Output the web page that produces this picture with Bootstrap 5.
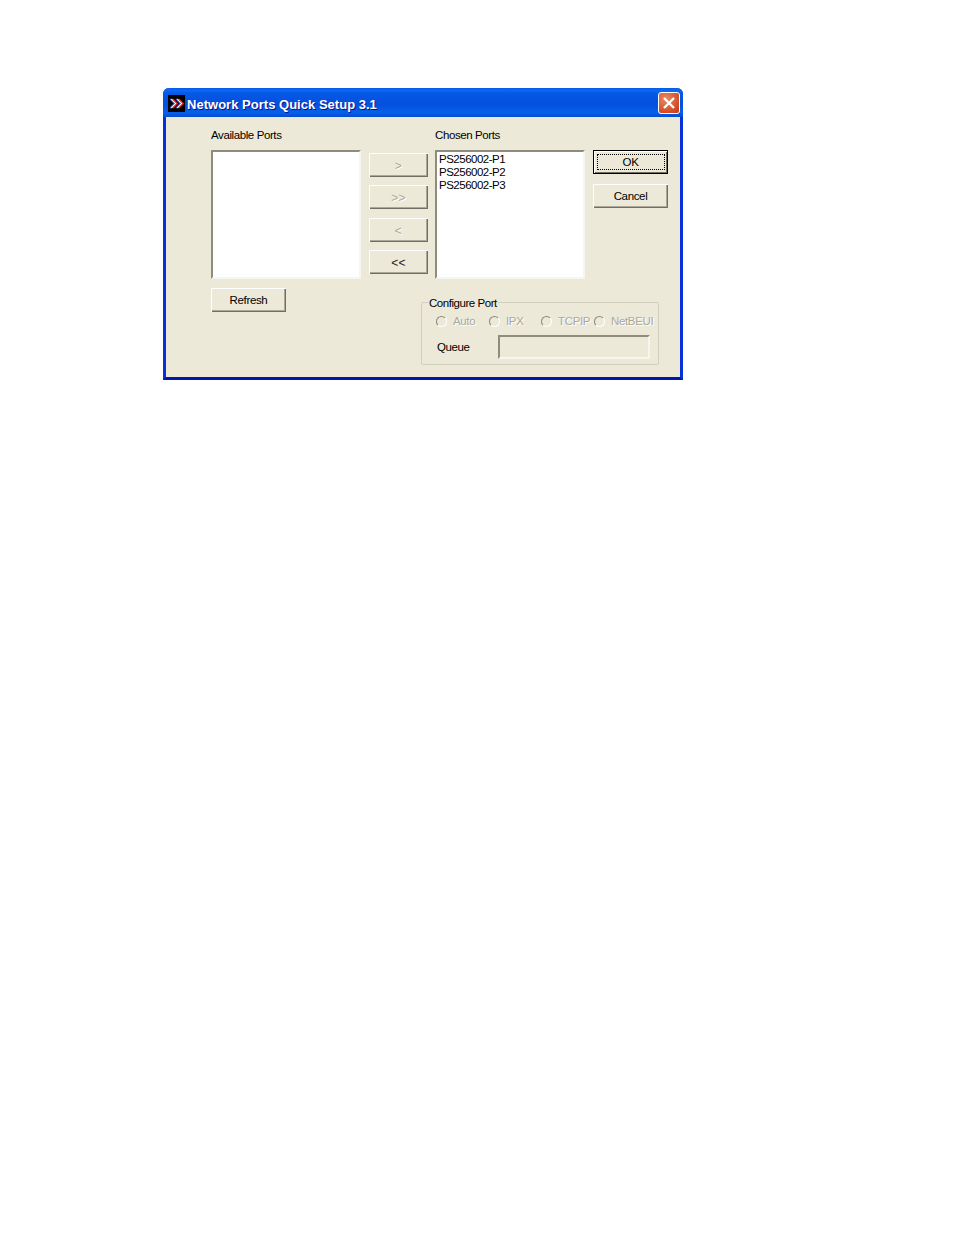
<!DOCTYPE html>
<html lang="en">
<head>
<meta charset="utf-8">
<title>Network Ports Quick Setup 3.1</title>
<link rel="stylesheet" href="https://cdn.jsdelivr.net/npm/bootstrap@5.3.0/dist/css/bootstrap.min.css">
<style>
body { background:#fff; font-family:"Liberation Sans",Arial,sans-serif; font-size:11.5px; color:#000; }
.xp-win { width:520px; height:292px; margin:88px 0 0 163px; background:#ece9d8; border:3px solid #0831d9; border-top:0; border-bottom-color:#0019a8; border-radius:6px 6px 0 0; display:flex; flex-direction:column; }
.xp-title { height:29px; margin:0 -3px; padding:0 3px 0 5px; border-radius:6px 6px 0 0; background:linear-gradient(180deg,#0a5be0 0%,#0a68f2 8%,#0558e6 20%,#0350dc 55%,#0560ea 85%,#044cce 100%); display:flex; align-items:center; gap:2px; }
.xp-title-text { color:#fff; font-weight:700; font-size:13px; letter-spacing:.02px; text-shadow:1px 1px 0 #0f1089; line-height:1; margin-top:3px; }
.xp-logo { display:block; flex:none; margin-top:1px; }
.xp-close { width:22px; height:22px; border:1px solid #fff; border-radius:3px; background:radial-gradient(circle at 35% 30%,#e98a68,#d8542c 60%,#c03a12); padding:0; display:flex; align-items:center; justify-content:center; margin-left:auto; margin-top:1px; }
.xp-body { flex:1; padding:11px 0 0 45px; display:flex; flex-direction:column; }
.xp-top { display:flex; }
.xp-col { width:150px; flex:none; }
.xp-label { line-height:14px; height:22px; letter-spacing:-.4px; white-space:nowrap; }
.xp-list { height:129px; width:150px; background:#fff; border:2px solid; border-color:#8f8c7e #f6f5ee #f6f5ee #8f8c7e; padding:1px 2px; line-height:13px; margin:0; list-style:none; }
.xp-list li { letter-spacing:-.5px; }
.xp-mid { width:60px; margin:25px 6px 0 8px; flex:none; display:flex; flex-direction:column; }
.xp-btn { --bs-btn-padding-x:0; --bs-btn-padding-y:0; --bs-btn-font-size:11.5px; --bs-btn-line-height:1; --bs-btn-color:#000; --bs-btn-bg:#ece9d8; --bs-btn-border-radius:0; --bs-btn-border-width:0; --bs-btn-hover-bg:#ece9d8; --bs-btn-hover-color:#000; --bs-btn-disabled-bg:#ece9d8; --bs-btn-disabled-color:#aca899; --bs-btn-disabled-opacity:1; display:block; height:24px; padding-top:2px; letter-spacing:-.35px; box-shadow:inset 1px 1px 0 #fff, inset -1px -1px 0 #716f64, inset -2px -2px 0 #aca899; }
.xp-btn:disabled { text-shadow:1px 1px 0 #fff; }
.xp-mid .xp-btn { margin-bottom:8px; width:59px; font-size:12px; letter-spacing:.3px; padding-top:1px; color:#222; }
.xp-mid .xp-btn:disabled { color:#aca899; }
.xp-mid .xp-btn:nth-child(2) { margin-bottom:9px; }
.xp-side { width:75px; margin:22px 0 0 8px; flex:none; }
.xp-side .xp-btn { width:75px; }
.xp-ok { box-shadow:inset 0 0 0 1px #000, inset 2px 2px 0 #fff, inset -2px -2px 0 #716f64; margin-bottom:10px; position:relative; }
.xp-ok::after { content:""; position:absolute; inset:4px 3px 4px 4px; border:1px dotted #000; }
.xp-bottom { display:flex; margin-top:6px; }
.xp-refresh { width:75px; flex:none; }
.xp-group { width:238px; height:63px; margin:14px 0 0 135px; border:1px solid #d0d0bf; border-radius:2px; position:relative; padding:11px 0 0 14px; }
.xp-legend { position:absolute; top:-6px; left:6px; background:#ece9d8; line-height:13px; padding:0 1px; letter-spacing:-.45px; white-space:nowrap; }
.xp-radios { display:flex; height:15px; align-items:center; color:#aca899; text-shadow:1px 1px 0 #fff; }
.xp-radio { display:flex; align-items:center; gap:6px; flex:none; white-space:nowrap; letter-spacing:-.35px; }
.xp-radio:nth-child(1) { width:53px; }
.xp-radio:nth-child(2) { width:52px; }
.xp-radio:nth-child(3) { width:53px; }
.xp-radio .form-check-input { width:11px; height:11px; margin:0; flex:none; background-color:#ece9d8; background-image:none; border:1px solid; border-color:#8a877a #fff #fff #8a877a; border-radius:50%; opacity:1; }
.xp-queue { display:flex; align-items:center; margin-top:6px; }
.xp-queue-lbl { width:62px; padding-left:1px; padding-top:2px; letter-spacing:-.4px; }
.xp-input { width:152px; height:24px; background:#ece9d8; border:2px solid; border-color:#8f8c7e #f6f5ee #f6f5ee #8f8c7e; border-radius:0; padding:0; }
.xp-input:disabled { background:#ece9d8; }
</style>
</head>
<body>
<div class="xp-win">
  <div class="xp-title">
    <svg class="xp-logo" width="17" height="17" viewBox="0 0 17 17"><rect width="17" height="17" fill="#000"/><path d="M2 4l4.5 4.5L2 13M8 4l4.5 4.5L8 13" fill="none" stroke="#3c50e8" stroke-width="1.4"/><path d="M3.4 4l4.5 4.5L3.4 13M9.4 4l4.5 4.5L9.4 13" fill="none" stroke="#fff" stroke-width="1.4"/><path d="M4.8 4l4.5 4.5L4.8 13M10.8 4l4.5 4.5L10.8 13" fill="none" stroke="#e82020" stroke-width="1.2"/></svg>
    <span class="xp-title-text">Network Ports Quick Setup 3.1</span>
    <button type="button" class="xp-close" aria-label="Close"><svg width="14" height="14" viewBox="0 0 14 14"><path d="M2 2l10 10M12 2L2 12" stroke="#fff" stroke-width="2.4" fill="none"/></svg></button>
  </div>
  <div class="xp-body">
    <div class="xp-top">
      <div class="xp-col">
        <div class="xp-label">Available Ports</div>
        <ul class="xp-list"></ul>
      </div>
      <div class="xp-mid">
        <button class="btn xp-btn" disabled>&gt;</button>
        <button class="btn xp-btn" disabled>&gt;&gt;</button>
        <button class="btn xp-btn" disabled>&lt;</button>
        <button class="btn xp-btn">&lt;&lt;</button>
      </div>
      <div class="xp-col">
        <div class="xp-label">Chosen Ports</div>
        <ul class="xp-list">
          <li>PS256002-P1</li>
          <li>PS256002-P2</li>
          <li>PS256002-P3</li>
        </ul>
      </div>
      <div class="xp-side">
        <button class="btn xp-btn xp-ok">OK</button>
        <button class="btn xp-btn">Cancel</button>
      </div>
    </div>
    <div class="xp-bottom">
      <button class="btn xp-btn xp-refresh">Refresh</button>
      <div class="xp-group">
        <div class="xp-legend">Configure Port</div>
        <div class="xp-radios">
          <label class="xp-radio"><input class="form-check-input" type="radio" disabled>Auto</label>
          <label class="xp-radio"><input class="form-check-input" type="radio" disabled>IPX</label>
          <label class="xp-radio"><input class="form-check-input" type="radio" disabled>TCPIP</label>
          <label class="xp-radio"><input class="form-check-input" type="radio" disabled>NetBEUI</label>
        </div>
        <div class="xp-queue">
          <span class="xp-queue-lbl">Queue</span>
          <input class="form-control xp-input" type="text" disabled aria-label="Queue">
        </div>
      </div>
    </div>
  </div>
</div>
<script src="https://cdn.jsdelivr.net/npm/bootstrap@5.3.0/dist/js/bootstrap.bundle.min.js"></script>
</body>
</html>
